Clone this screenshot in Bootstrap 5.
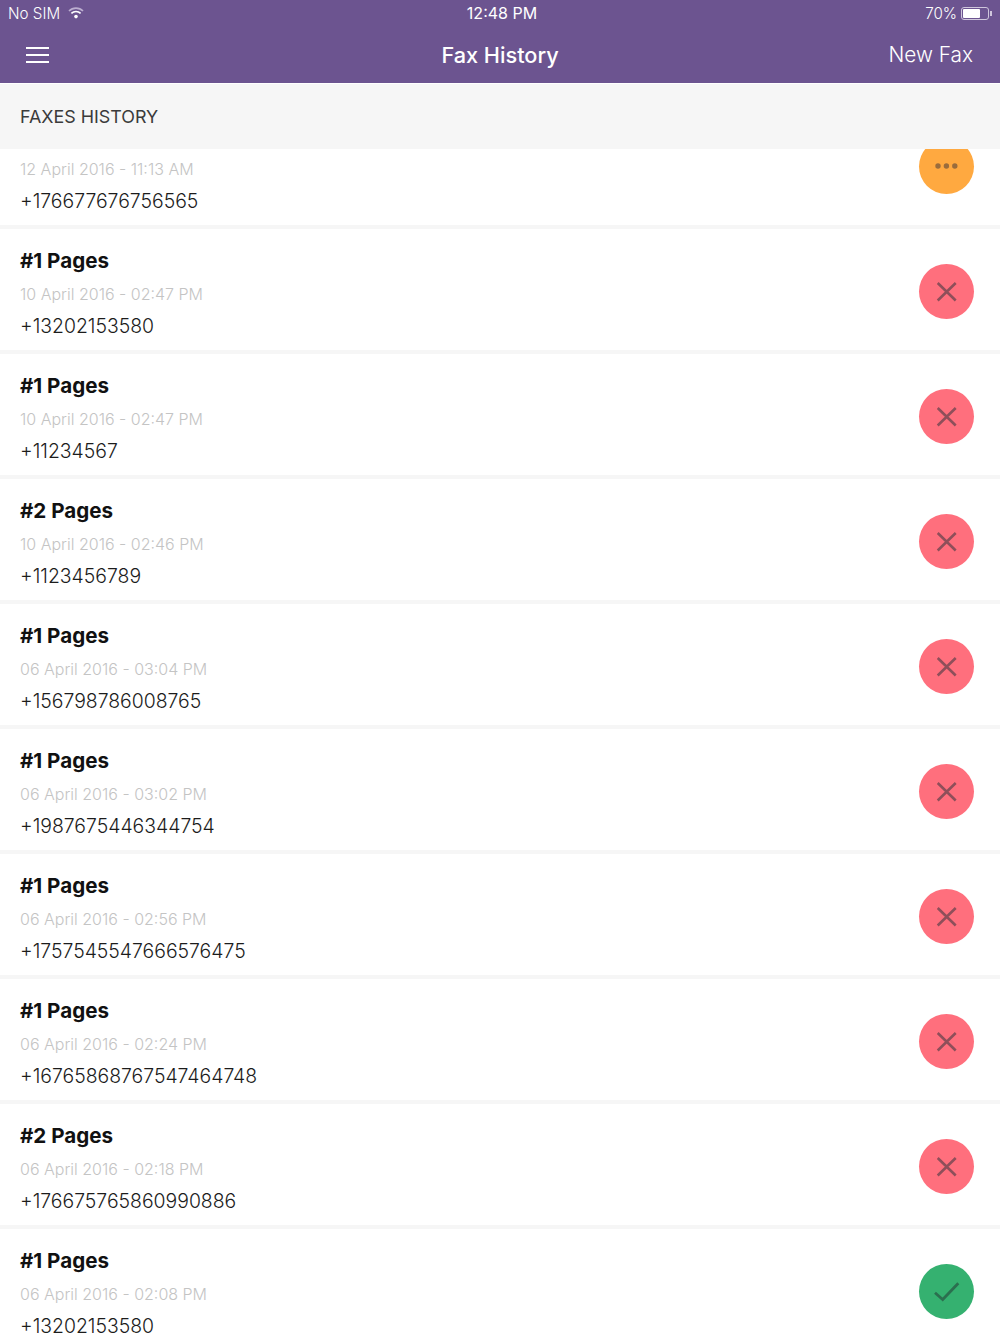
<!DOCTYPE html>
<html lang="en">
<head>
    <meta charset="utf-8">
    <title>Fax History</title>
    <link href="https://cdn.jsdelivr.net/npm/bootstrap@5.3.3/dist/css/bootstrap.min.css" rel="stylesheet">
    <style>
        body {
            font-family: Inter, "Liberation Sans", sans-serif;
            height: 100vh;
            overflow: hidden;
            background: #fff;
        }
        .top-bar {
            background: #6c5490;
            color: #fff;
            height: 83px;
            flex-shrink: 0;
        }
        .status-row {
            height: 27px;
            padding: 0 8px;
            font-size: 15.2px;
            font-weight: 300;
            line-height: 27px;
        }
        .status-side { flex: 1 1 0; }
        .status-time { font-size: 16px; font-weight: 400; margin-left: 4px; }
        .wifi-icon { margin-left: 8px; margin-top: -2px; }
        .batt-box {
            width: 28px;
            height: 13px;
            border: 1px solid #cfc6dc;
            border-radius: 3px;
            padding: 1px;
            margin-left: 4px;
            margin-right: 3px;
            position: relative;
        }
        .batt-fill { width: 70%; height: 100%; background: #fff; border-radius: 1px; }
        .batt-box::after {
            content: "";
            position: absolute;
            right: -4px;
            top: 3px;
            width: 2px;
            height: 5px;
            background: #cfc6dc;
        }
        .nav-row { height: 56px; padding: 0 27px 0 26px; }
        .menu-lines { width: 23px; display: grid; gap: 5px; }
        .menu-lines span { height: 2px; background: #fff; }
        .nav-title { font-size: 21.7px; font-weight: 500; margin-left: 1px; }
        .nav-side { flex: 1 1 0; font-size: 20.8px; font-weight: 300; }
        .section-head {
            margin-top: 1px;
            height: 65px;
            padding-left: 20px;
            background: #f6f6f6;
            color: #3b3b3b;
            font-size: 17.9px;
            line-height: 65px;
            flex-shrink: 0;
        }
        .list-clip { overflow: hidden; flex: 1 1 auto; min-height: 0; }
        .fax-list { margin-top: -45px; }
        .fax-list .fax-row.list-group-item {
            padding: 16px 26px 8px 20px;
            height: 125px;
            border: 0;
            border-bottom: 4px solid #f6f6f6;
            border-radius: 0;
        }
        .fax-pages { font-size: 20.6px; font-weight: 700; line-height: 32px; height: 33px; color: #111; }
        .fax-date { font-size: 16px; font-weight: 300; line-height: 33px; color: #c4c4c4; }
        .fax-number { font-size: 19.4px; font-weight: 300; line-height: 31px; color: #1c1c1c; }
        .status-dot {
            width: 55px;
            height: 55px;
            border-radius: 50%;
            margin-top: -4px;
        }
        .dot-pending { background: #ffa940; }
        .dot-failed { background: #ff6f7d; }
        .dot-sent { background: #35b170; }
    </style>
</head>
<body class="d-flex flex-column">

<!-- Status bar + nav -->
<header class="top-bar">
    <div class="status-row d-flex align-items-center">
        <div class="status-side d-flex align-items-center">
            No SIM
            <svg class="wifi-icon" width="16" height="12" viewBox="0 0 16 12">
                <path d="M1 4a9.9 9.9 0 0 1 14 0" fill="none" stroke="#bcaed0" stroke-width="1.6"/>
                <path d="M3.4 6.4a6.5 6.5 0 0 1 9.2 0" fill="none" stroke="#fff" stroke-width="1.6"/>
                <circle cx="8" cy="9.6" r="1.8" fill="#fff"/>
            </svg>
        </div>
        <div class="status-time">12:48 PM</div>
        <div class="status-side d-flex align-items-center justify-content-end">
            70%
            <div class="batt-box"><div class="batt-fill"></div></div>
        </div>
    </div>
    <div class="nav-row d-flex align-items-center">
        <div class="nav-side">
            <div class="menu-lines"><span></span><span></span><span></span></div>
        </div>
        <div class="nav-title">Fax History</div>
        <div class="nav-side text-end">New Fax</div>
    </div>
</header>

<div class="section-head">FAXES HISTORY</div>

<!-- List is scrolled, first row sits partly under the header -->
<div class="list-clip">
    <ul class="list-group list-group-flush fax-list" id="faxList"></ul>
</div>

<script>
    const faxes = [
        { pages: "", date: "12 April 2016 - 11:13 AM", number: "+176677676756565", status: "pending" },
        { pages: "#1 Pages", date: "10 April 2016 - 02:47 PM", number: "+13202153580", status: "failed" },
        { pages: "#1 Pages", date: "10 April 2016 - 02:47 PM", number: "+11234567", status: "failed" },
        { pages: "#2 Pages", date: "10 April 2016 - 02:46 PM", number: "+1123456789", status: "failed" },
        { pages: "#1 Pages", date: "06 April 2016 - 03:04 PM", number: "+156798786008765", status: "failed" },
        { pages: "#1 Pages", date: "06 April 2016 - 03:02 PM", number: "+1987675446344754", status: "failed" },
        { pages: "#1 Pages", date: "06 April 2016 - 02:56 PM", number: "+1757545547666576475", status: "failed" },
        { pages: "#1 Pages", date: "06 April 2016 - 02:24 PM", number: "+16765868767547464748", status: "failed" },
        { pages: "#2 Pages", date: "06 April 2016 - 02:18 PM", number: "+176675765860990886", status: "failed" },
        { pages: "#1 Pages", date: "06 April 2016 - 02:08 PM", number: "+13202153580", status: "sent" }
    ];

    const icons = {
        pending: '<circle cx="19" cy="27" r="2.7" fill="#9a6c3c"/><circle cx="27.4" cy="27" r="2.7" fill="#9a6c3c"/><circle cx="35.8" cy="27" r="2.7" fill="#9a6c3c"/>',
        failed: '<path d="M18.7 19l18 17.5M36.7 19l-18 17.5" stroke="#8f4f5a" stroke-width="2.6" fill="none"/>',
        sent: '<path d="M16 28.8l7.7 6.7 15.6-16.3" stroke="#2b6f4f" stroke-width="2.8" fill="none"/>'
    };

    const list = document.getElementById('faxList');
    faxes.forEach((fax) => {
        list.innerHTML += `
            <li class="list-group-item fax-row d-flex justify-content-between align-items-center">
                <div>
                    <div class="fax-pages">${fax.pages}</div>
                    <div class="fax-date">${fax.date}</div>
                    <div class="fax-number">${fax.number}</div>
                </div>
                <svg class="status-dot dot-${fax.status}" viewBox="0 0 55 55">${icons[fax.status]}</svg>
            </li>`;
    });
</script>

<script src="https://cdn.jsdelivr.net/npm/bootstrap@5.3.3/dist/js/bootstrap.bundle.min.js"></script>
</body>
</html>
